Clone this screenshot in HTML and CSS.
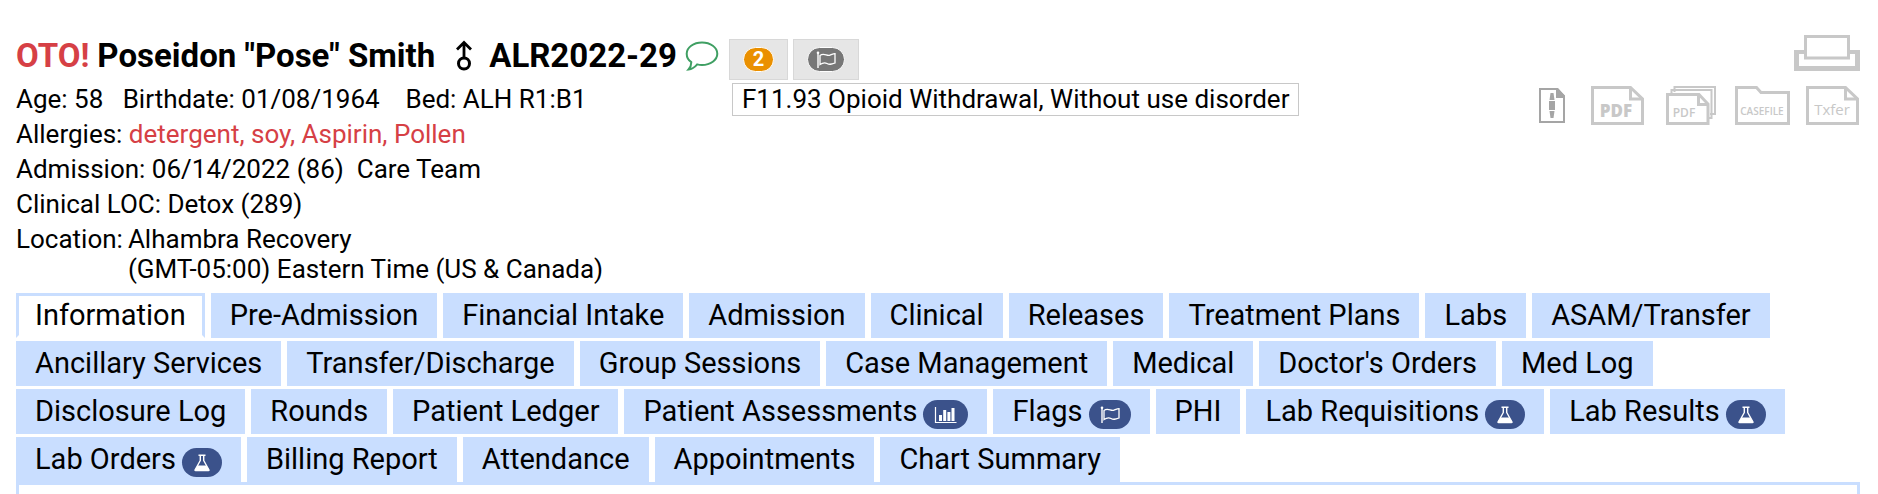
FILE: index.html
```html
<!DOCTYPE html>
<html lang="en">
<head>
  <meta charset="UTF-8" />
  <meta name="viewport" content="width=device-width, initial-scale=1.0"/>
  <title>Patient Chart</title>
  <link rel="stylesheet" href="styles.css">
</head>
<body>

<!-- Shared icons -->
<svg class="sprite" aria-hidden="true">
  <symbol id="icon-flag" viewBox="0 0 20 18">
    <path d="M2 1.5V17" fill="none" stroke="currentColor" stroke-width="1.4"/>
    <circle cx="2" cy="1.8" r="1.3" fill="currentColor"/>
    <path d="M4 4.5C8 1.5 11 5.5 14 4.2C16 3.4 17.5 2.6 19 2.6V12C15 13.5 13.5 14 11 12.5C8.5 11 6.5 11.8 4 13.5Z" fill="none" stroke="currentColor" stroke-width="1.3"/>
  </symbol>
  <symbol id="icon-chart" viewBox="0 0 23 18">
    <path d="M1.5 1V16.5H22.5" fill="none" stroke="currentColor" stroke-width="1.2"/>
    <path d="M5 9h3v6H5zM9.2 4h3v11h-3zM13.4 6h3v9h-3zM17.5 2h3v13h-3z" fill="currentColor"/>
  </symbol>
  <symbol id="icon-flask" viewBox="0 0 18 18">
    <path d="M5.5 1.2H12.5M7.3 1.5V6.5L2 16H16L10.7 6.5V1.5" fill="none" stroke="currentColor" stroke-width="1.4" stroke-linejoin="round"/>
    <path d="M4.6 11.5H13.4L16.5 16.5Q16.5 17.3 15.5 17.3H2.5Q1.5 17.3 1.5 16.5Z" fill="currentColor"/>
  </symbol>
</svg>

<header class="chart-header">
  <div class="patient">
    <h1 class="patient-name">
      <span class="alert">OTO!</span>
      <span>Poseidon "Pose" Smith</span>
      <svg class="gender" viewBox="0 0 18 32" role="img" aria-label="Male">
        <path d="M9 18V3M2 9.5L9 2.5L16 9.5" fill="none" stroke="currentColor" stroke-width="2.8"/>
        <circle cx="9" cy="23.5" r="5.5" fill="none" stroke="currentColor" stroke-width="3"/>
      </svg>
      <span>ALR2022-29</span>
      <svg class="comment" viewBox="0 0 34 30" role="img" aria-label="Comments">
        <path d="M17 1.5C25.5 1.5 32.3 6.5 32.3 12.8C32.3 19 25.5 24 17 24C15.3 24 13.7 23.8 12.2 23.4C10 26 7 28.2 3.5 28.5C5.3 26.5 6.3 24 6.3 21.2C3.3 19.2 1.7 16.2 1.7 12.8C1.7 6.5 8.5 1.5 17 1.5Z" fill="none" stroke="currentColor" stroke-width="2"/>
      </svg>
    </h1>
    <div class="detail">Age: 58 &nbsp; Birthdate: 01/08/1964 &nbsp;&nbsp; Bed: ALH R1:B1</div>
    <div class="detail">Allergies: <span class="alert">detergent, soy, Aspirin, Pollen</span></div>
    <div class="detail">Admission: 06/14/2022 (86) &nbsp;Care Team</div>
    <div class="detail">Clinical LOC: Detox (289)</div>
    <div class="detail location">
      <span>Location:</span>
      <span>Alhambra Recovery<br>(GMT-05:00) Eastern Time (US &amp; Canada)</span>
    </div>
  </div>

  <div class="flags">
    <div class="flag-buttons">
      <button class="flag-btn"><span class="pill orange">2</span></button>
      <button class="flag-btn" aria-label="Flags"><span class="pill gray"><svg class="icon-flag"><use href="#icon-flag"/></svg></span></button>
    </div>
    <div class="diagnosis">F11.93 Opioid Withdrawal, Without use disorder</div>
  </div>

  <div class="tools">
    <a href="#" aria-label="Print">
      <svg width="66" height="36" viewBox="0 0 66 36">
        <path d="M0 15H10V19H5V31H61V19H56V15H66V36H0Z" fill="#c8c8c8"/>
        <path d="M11.5 1.5H54.5V23H11.5Z" fill="#fff" stroke="#c8c8c8" stroke-width="3"/>
      </svg>
    </a>
    <div class="exports">
      <a class="zip" href="#" aria-label="Zip">
        <svg width="26" height="35" viewBox="0 0 26 35">
          <path d="M1 1H18L25 8V34H1Z" fill="#fff" stroke="#a5a5a5" stroke-width="2"/>
          <path d="M17 0H19L26 8V10H17Z" fill="#a5a5a5"/>
          <path d="M11.5 5H14.5L15.5 12H10.5ZM10 13H16V22H10ZM10.5 23H15.5L14.5 30H11.5Z" fill="#a5a5a5"/>
        </svg>
      </a>
      <a class="pdf" href="#" aria-label="PDF">
        <svg width="53" height="39" viewBox="0 0 53 39">
          <path d="M1.5 1.5H39.5L51.5 13V37.5H1.5Z" fill="#fff" stroke="#c8c8c8" stroke-width="3"/>
          <path d="M39.5 1.5V13H51.5" fill="none" stroke="#c8c8c8" stroke-width="3"/>
          <text class="doc-text bold" x="25" y="31" font-size="17">PDF</text>
        </svg>
      </a>
      <a class="pdfs" href="#" aria-label="PDF packets">
        <svg width="50" height="39" viewBox="0 0 50 39">
          <path d="M8.5 6V1H49V28H44M5.5 8V4H45.5V32H42" fill="none" stroke="#c8c8c8" stroke-width="2"/>
          <path d="M1.5 8.5H33L42 18V37.5H1.5Z" fill="#fff" stroke="#c8c8c8" stroke-width="3"/>
          <path d="M32.5 8.5V18.5H42" fill="none" stroke="#c8c8c8" stroke-width="3"/>
          <text class="doc-text semi" x="18" y="31" font-size="12">PDF</text>
        </svg>
      </a>
      <a class="casefile" href="#" aria-label="Casefile">
        <svg width="55" height="39" viewBox="0 0 55 39">
          <path d="M1.5 1.5H21.5L26 6.5H53.5V37.5H1.5Z" fill="#fff" stroke="#c8c8c8" stroke-width="3"/>
          <text class="doc-text semi" x="27" y="29" font-size="10">CASEFILE</text>
        </svg>
      </a>
      <a class="txfer" href="#" aria-label="Transfer">
        <svg width="53" height="39" viewBox="0 0 53 39">
          <path d="M1.5 1.5H39.5L51.5 13V37.5H1.5Z" fill="#fff" stroke="#c8c8c8" stroke-width="3"/>
          <path d="M39.5 1.5V13H51.5" fill="none" stroke="#c8c8c8" stroke-width="3"/>
          <text class="doc-text" x="26" y="29" font-size="15">Txfer</text>
        </svg>
      </a>
    </div>
  </div>
</header>

<nav class="tabs">
  <a class="tab active" href="#">Information</a>
  <a class="tab" href="#">Pre-Admission</a>
  <a class="tab" href="#">Financial Intake</a>
  <a class="tab" href="#">Admission</a>
  <a class="tab" href="#">Clinical</a>
  <a class="tab" href="#">Releases</a>
  <a class="tab" href="#">Treatment Plans</a>
  <a class="tab" href="#">Labs</a>
  <a class="tab" href="#">ASAM/Transfer</a>
  <a class="tab" href="#">Ancillary Services</a>
  <a class="tab" href="#">Transfer/Discharge</a>
  <a class="tab" href="#">Group Sessions</a>
  <a class="tab" href="#">Case Management</a>
  <a class="tab" href="#">Medical</a>
  <a class="tab" href="#">Doctor's Orders</a>
  <a class="tab" href="#">Med Log</a>
  <a class="tab" href="#">Disclosure Log</a>
  <a class="tab" href="#">Rounds</a>
  <a class="tab" href="#">Patient Ledger</a>
  <a class="tab" href="#">Patient Assessments <span class="badge"><svg class="icon-chart"><use href="#icon-chart"/></svg></span></a>
  <a class="tab" href="#">Flags <span class="badge"><svg class="icon-flag"><use href="#icon-flag"/></svg></span></a>
  <a class="tab" href="#">PHI</a>
  <a class="tab" href="#">Lab Requisitions <span class="badge"><svg class="icon-flask"><use href="#icon-flask"/></svg></span></a>
  <a class="tab" href="#">Lab Results <span class="badge"><svg class="icon-flask"><use href="#icon-flask"/></svg></span></a>
  <a class="tab" href="#">Lab Orders <span class="badge"><svg class="icon-flask"><use href="#icon-flask"/></svg></span></a>
  <a class="tab" href="#">Billing Report</a>
  <a class="tab" href="#">Attendance</a>
  <a class="tab" href="#">Appointments</a>
  <a class="tab" href="#">Chart Summary</a>
</nav>
<main class="panel"></main>

</body>
</html>
```
FILE: styles.css
```css
:root {
  --tab: #c9deff;
  --badge: #3b528b;
  --red: #d64045;
  --green: #3f9f63;
}

* {
  margin: 0;
  padding: 0;
  box-sizing: border-box;
}

body {
  display: flex;
  flex-direction: column;
  min-height: 100vh;
  padding: 35px 18px 0 16px;
  font-family: Roboto, sans-serif;
  font-size: 26px;
  color: #000;
  background: #fff;
}

.sprite {
  position: absolute;
  width: 0;
  height: 0;
}

.alert {
  color: var(--red);
}

.chart-header {
  display: flex;
  align-items: flex-start;
  gap: 10px;
}

.patient-name {
  display: flex;
  align-items: center;
  gap: 8px;
  height: 46px;
  padding-bottom: 4px;
  font-size: 33px;
  line-height: 42px;
  white-space: nowrap;
}

.gender {
  width: 18px;
  height: 32px;
  margin: 0 8px 0 12px;
}

.comment {
  width: 34px;
  height: 30px;
  color: var(--green);
}

.detail {
  line-height: 30px;
  padding: 3px 0 2px;
}

.location {
  display: flex;
  gap: 5px;
}

.flag-buttons {
  display: flex;
  gap: 5px;
  padding-top: 4px;
}

.flag-btn {
  height: 41px;
  padding: 0 13px;
  border: 1px solid #d8d8d8;
  background: #e6e6e6;
  font-family: inherit;
}

.pill {
  display: flex;
  align-items: center;
  justify-content: center;
  height: 25px;
  border: 1px solid #fff;
  border-radius: 13px;
  color: #fff;
  font-size: 20px;
  font-weight: bold;
  line-height: 23px;
}

.orange {
  width: 31px;
  background: #ea9000;
}

.gray {
  width: 38px;
  background: #777;
}

.icon-flag {
  width: 20px;
  height: 18px;
}

.diagnosis {
  width: max-content;
  margin: 3px 0 0 3px;
  padding: 0 9px;
  border: 1px solid #c8c8c8;
  line-height: 31px;
}

.tools {
  display: flex;
  flex-direction: column;
  align-items: flex-end;
  gap: 15px;
  margin-left: auto;
}

.tools a,
.tools svg {
  display: block;
}

.exports {
  display: flex;
  align-items: center;
  margin-right: 1px;
}

.pdf {
  margin-left: 26px;
}

.pdfs {
  margin-left: 22px;
}

.casefile {
  margin-left: 19px;
}

.txfer {
  margin-left: 16px;
}

.doc-text {
  font-family: "Open Sans", sans-serif;
  fill: #c8c8c8;
  text-anchor: middle;
}

.semi {
  font-weight: 600;
}

.bold {
  font-weight: 800;
}

.tabs {
  display: flex;
  flex-wrap: wrap;
  gap: 3px 6px;
  margin-top: 7px;
}

.tab {
  display: flex;
  align-items: center;
  height: 45px;
  padding: 0 16px;
  border: 3px solid var(--tab);
  background: var(--tab);
  color: #000;
  font-size: 29px;
  line-height: 39px;
  text-decoration: none;
}

.active {
  background: #fff;
  border-bottom-color: #fff;
}

.badge {
  display: flex;
  align-items: center;
  height: 29px;
  margin: 6px 0 0 6px;
  padding: 0 11px;
  border-radius: 15px;
  background: var(--badge);
  color: #fff;
}

.icon-chart {
  width: 23px;
  height: 18px;
}

.icon-flask {
  width: 18px;
  height: 18px;
}

.panel {
  flex: 1;
  border: 3px solid var(--tab);
  border-bottom: none;
}
```
